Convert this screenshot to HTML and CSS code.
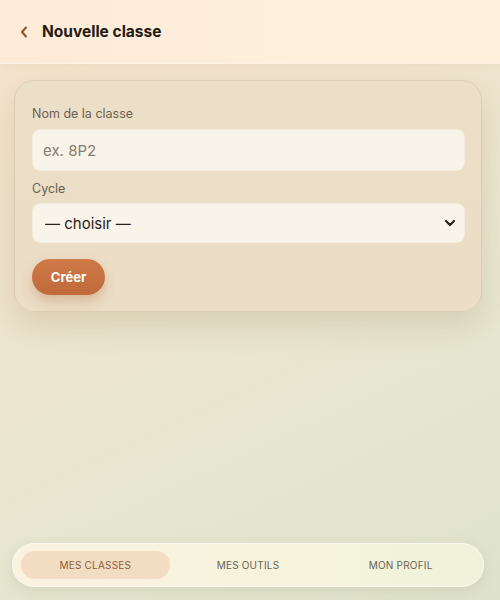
FILE: index.html
```html
<!DOCTYPE html>
<html lang="fr">
<head>
<meta charset="utf-8">
<title>Nouvelle classe</title>
<link rel="stylesheet" href="styles.css">
</head>
<body>
<div class="app">
  <header class="topbar">
    <button class="back" aria-label="Retour">
      <svg width="10" height="14" viewBox="0 0 10 14"><path d="M7 2.5 L3 7 L7 11.5" fill="none" stroke="#8a5230" stroke-width="2" stroke-linecap="round" stroke-linejoin="round"/></svg>
    </button>
    <h1 class="title">Nouvelle classe</h1>
  </header>
  <main class="content">
    <form class="card">
      <label class="label" for="nom">Nom de la classe</label>
      <input class="field" id="nom" type="text" placeholder="ex. 8P2">
      <label class="label label-cycle" for="cycle">Cycle</label>
      <div class="select-wrap">
        <select class="field select" id="cycle">
          <option>— choisir —</option>
        </select>
        <svg class="caret" width="12" height="8" viewBox="0 0 12 8"><path d="M2 2 L6 6 L10 2" fill="none" stroke="#2a2118" stroke-width="2.2" stroke-linecap="round" stroke-linejoin="round"/></svg>
      </div>
      <div class="actions">
        <button type="button" class="btn">Créer</button>
      </div>
    </form>
  </main>
  <nav class="tabbar">
    <a class="tab active">MES CLASSES</a>
    <a class="tab">MES OUTILS</a>
    <a class="tab">MON PROFIL</a>
  </nav>
</div>
</body>
</html>
```

FILE: styles.css
```css
* { box-sizing: border-box; }
html, body { margin: 0; height: 100%; }
body {
  font-family: "Inter", "Lato", "Liberation Sans", sans-serif;
  background: linear-gradient(155deg, #f6e2cc 0%, #efe4cd 35%, #e6e6d0 70%, #dfe3cb 100%);
  color: #2a2118;
}
.app {
  height: 600px;
  display: flex;
  flex-direction: column;
}
.topbar {
  height: 64px;
  flex: none;
  display: flex;
  align-items: center;
  gap: 11px;
  padding: 0 0 0 19px;
  background: linear-gradient(90deg, #fdebd8 0%, #fdefdc 60%, #fcefdb 100%);
  border-bottom: 1px solid #fbf1e4;
  box-shadow: 0 2px 6px rgba(180, 140, 100, 0.08);
}
.back {
  border: none;
  background: none;
  padding: 0;
  width: 12px;
  height: 14px;
  display: flex;
  align-items: center;
  cursor: pointer;
}
.title {
  margin: 0;
  font-size: 15.5px;
  font-weight: 700;
  color: #231a12;
}
.content {
  flex: 1;
  padding: 16px 18px 0 14px;
}
.card {
  background: linear-gradient(180deg, #ecdfc8 0%, #ebddc6 100%);
  border: 1px solid #dccdb2;
  border-radius: 20px;
  padding: 25px 16px 16px 17px;
  display: flex;
  flex-direction: column;
  box-shadow: 0 14px 30px rgba(150, 130, 90, 0.22);
  height: 232px;
}
.label {
  font-size: 12.5px;
  color: #6b5f50;
  margin-bottom: 7px;
  line-height: 16px;
}
.label-cycle { margin-top: 10px; margin-bottom: 6px; }
.field {
  width: 100%;
  height: 42px;
  border: 1px solid #f3ebdc;
  border-radius: 8px;
  background: #f9f4e9;
  font-family: "Inter", "Liberation Sans", sans-serif;
  font-size: 15px;
  padding: 0 10px;
  color: #2a2118;
  outline: none;
}
.field::placeholder { color: #857b6e; }
.select-wrap { position: relative; }
.select {
  appearance: none;
  -webkit-appearance: none;
  height: 40px;
  padding-left: 12px;
  color: #2a2118;
}
.caret {
  position: absolute;
  right: 9px;
  top: 16px;
  pointer-events: none;
}
.actions { margin-top: 16px; }
.btn {
  border: none;
  height: 36px;
  width: 73px;
  border-radius: 18px;
  background: linear-gradient(180deg, #cf7a47 0%, #c0693a 100%);
  color: #fff;
  font-family: "Inter", "Liberation Sans", sans-serif;
  font-size: 13px;
  font-weight: 700;
  box-shadow: 0 6px 12px rgba(170, 100, 50, 0.3);
  cursor: pointer;
}
.tabbar {
  margin: 0 16px 13px 12px;
  height: 44px;
  border-radius: 22px;
  background: linear-gradient(90deg, #fbf2e0 0%, #f6f3dc 60%, #eff2d9 100%);
  border: 1px solid rgba(255,255,255,0.5);
  box-shadow: 0 4px 14px rgba(140, 140, 100, 0.18);
  display: grid;
  grid-template-columns: repeat(3, 1fr);
  align-items: center;
  padding: 0 8px;
  gap: 4px;
}
.tab {
  height: 28px;
  border-radius: 14px;
  display: flex;
  align-items: center;
  justify-content: center;
  font-size: 10px;
  letter-spacing: 0.2px;
  color: #6a6152;
}
.tab.active {
  background: #f2dcc2;
  color: #8a5e3e;
}
```
